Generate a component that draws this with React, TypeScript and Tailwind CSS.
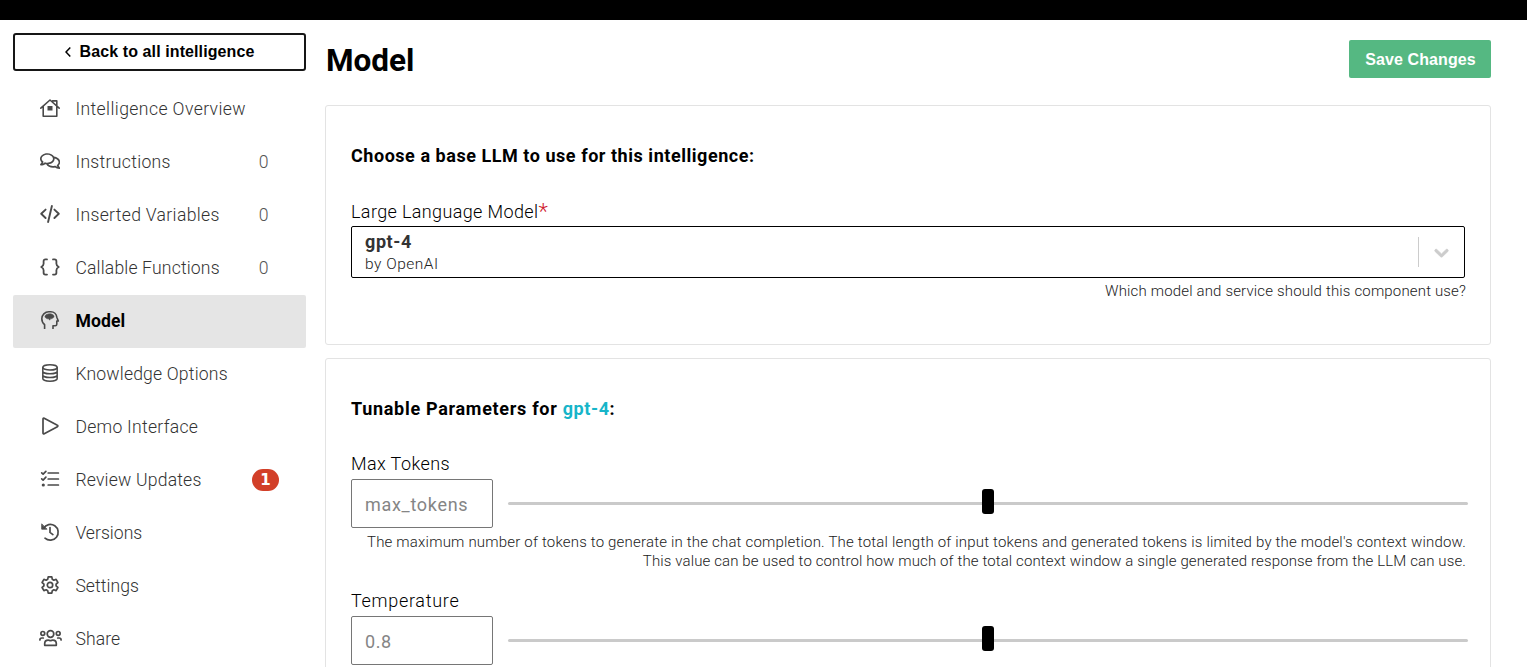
import type { ReactNode } from "react";
import { FaRegComments } from "react-icons/fa";

function Stroke({ w = 18, sw = 1.6, children }: { w?: number; sw?: number; children: ReactNode }) {
  return (
    <svg
      width={w}
      height={18}
      viewBox={`0 0 ${w} 18`}
      fill="none"
      stroke="currentColor"
      strokeWidth={sw}
      strokeLinecap="round"
      strokeLinejoin="round"
      className="shrink-0 overflow-visible"
    >
      {children}
    </svg>
  );
}

const HomeIcon = () => (
  <Stroke w={20} sw={1.6}>
    <path d="M.8 9.2 10 1l9.2 8.2M3.2 7.500v9.700h13.600V7.500M12.600 1.900h4.200v4.800" />
    <rect x="7.500" y="7" width="5" height="4.500" fill="currentColor" stroke="none" />
  </Stroke>
);

const CodeIcon = () => (
  <Stroke w={20} sw={1.9}>
    <path d="M5.600 4.600 1.200 8.800l4.400 4.200M14.400 4.600l4.400 4.200-4.400 4.200M11.900 1 8.100 17" />
  </Stroke>
);

const BracesIcon = () => (
  <Stroke w={20} sw={1.800}>
    <path d="M7 1.400H5.400c-1.100 0-1.800.7-1.800 1.800v2.600c0 1.600-.6 2.400-2.400 3.200 1.800.8 2.400 1.600 2.400 3.200v2.600c0 1.100.7 1.800 1.800 1.800H7M13 1.400h1.600c1.100 0 1.800.7 1.800 1.800v2.600c0 1.600.6 2.400 2.400 3.200-1.800.8-2.400 1.600-2.400 3.200v2.600c0 1.100-.7 1.800-1.800 1.800H13" />
  </Stroke>
);

const BrainIcon = () => (
  <Stroke sw={1.600}>
    <path
      strokeLinecap="butt"
      d="M3.600 18v-4.300C1.800 12.200.8 10.200.8 7.800.8 3.900 3.900.8 7.800.8h2c3.200 0 5.700 2.300 6 5.400l1.500 3.800h-1.500v3.200c0 .9-.7 1.600-1.600 1.600H12V18"
    />
    <path
      fill="currentColor"
      stroke="currentColor"
      strokeWidth=".5"
      d="M7 3.200c.5-.6 1.500-.7 2-.2.7-.5 1.700-.3 2.100.4.9 0 1.600.6 1.700 1.400.6.9.1 2-1 2.100-.4.7-1.300 1-2.100.7L8.700 9.200 7.600 7.700C6.400 8 5.500 7.700 5 7 3.900 6.600 3.600 5.400 4.300 4.600 4.600 3.600 5.800 2.900 7 3.200z"
    />
  </Stroke>
);

const DatabaseIcon = () => (
  <Stroke w={16} sw={1.500}>
    <ellipse cx="8" cy="3.400" rx="7.200" ry="2.600" />
    <path d="M.8 3.400v11.200c0 1.400 3.200 2.600 7.200 2.600s7.200-1.200 7.200-2.600V3.400M.8 7.200c0 1.400 3.200 2.600 7.200 2.600s7.200-1.200 7.200-2.600M.8 10.900c0 1.400 3.200 2.600 7.200 2.600s7.200-1.200 7.200-2.600" />
  </Stroke>
);

const PlayIcon = () => (
  <Stroke w={17} sw={1.700}>
    <path d="M1 1.900v14.200c0 .7.6 1 1.200.7L15.400 9.700c.6-.3.6-1.100 0-1.400L2.200 1.200C1.600.9 1 1.200 1 1.900z" />
  </Stroke>
);

const TasksIcon = () => (
  <Stroke sw={1.700}>
    <path d="M7.200 3h10.200M7.200 9h10.200M7.200 15h10.200M.7 2.900l1.400 1.300L4.900 1.300M.7 8.800l1.400 1.300 2.800-2.900" />
    <circle cx="2.300" cy="15" r="1.600" fill="currentColor" stroke="none" />
  </Stroke>
);

const HistoryIcon = () => (
  <Stroke sw={1.700}>
    <path d="M2.500 5.200A7.900 7.900 0 1 1 4 15.200M9 4.600v4.800l2.900 2.200" />
    <path d="M.7 1.200v5h5z" fill="currentColor" strokeWidth=".8" />
  </Stroke>
);

const GearIcon = () => (
  <Stroke sw={1.700}>
    <circle cx="9" cy="9" r="2.700" />
    <path d="M7.200.9h3.600l.5 2.400 1.500.9 2.300-.8 1.800 3.100-1.800 1.600v1.800l1.800 1.600-1.800 3.100-2.300-.8-1.500.9-.5 2.400H7.200l-.5-2.400-1.500-.9-2.300.8-1.800-3.100 1.800-1.600V8.100L1.100 6.500l1.800-3.100 2.300.8 1.500-.9z" />
  </Stroke>
);

const UsersIcon = () => (
  <Stroke w={23} sw={1.700}>
    <circle cx="11.500" cy="5" r="3.300" />
    <circle cx="3.800" cy="4.400" r="1.900" />
    <circle cx="19.200" cy="4.400" r="1.900" />
    <path d="M5.700 16.300v-1.700c0-2.100 1.500-3.400 3.500-3.400.9 0 1.400.4 2.300.4s1.400-.4 2.300-.4c2 0 3.500 1.300 3.500 3.400v1.700zM.9 10.900C.9 9.700 1.800 9 2.900 9h1.400M22.100 10.900c0-1.200-.9-1.900-2-1.900h-1.400" />
  </Stroke>
);

type NavItem = { label: string; track: string; icon: ReactNode; count?: string; badge?: string; active?: boolean };

const NAV: NavItem[] = [
  { label: "Intelligence Overview", track: "tracking-[0.4px]", icon: <HomeIcon /> },
  { label: "Instructions", track: "tracking-[0.31px]", icon: <FaRegComments className="h-[18px] w-[20.25px]" />, count: "0" },
  { label: "Inserted Variables", track: "tracking-[0.32px]", icon: <CodeIcon />, count: "0" },
  { label: "Callable Functions", track: "tracking-[0.16px]", icon: <BracesIcon />, count: "0" },
  { label: "Model", track: "tracking-[0.1px]", icon: <BrainIcon />, active: true },
  { label: "Knowledge Options", track: "tracking-[0.17px]", icon: <DatabaseIcon /> },
  { label: "Demo Interface", track: "tracking-[0.27px]", icon: <PlayIcon /> },
  { label: "Review Updates", track: "tracking-[0.19px]", icon: <TasksIcon />, badge: "1" },
  { label: "Versions", track: "tracking-normal", icon: <HistoryIcon /> },
  { label: "Settings", track: "tracking-[0.05px]", icon: <GearIcon /> },
  { label: "Share", track: "tracking-[0.1px]", icon: <UsersIcon /> },
];

function NavRow({ item }: { item: NavItem }) {
  return (
    <a
      className={`flex h-[53px] items-center rounded-[2px] pr-[27px] pl-[25px] text-[17.6px] ${
        item.active ? "bg-[#e5e5e5] font-bold text-black" : "font-light text-[#333]"
      }`}
    >
      <span className="mb-[3px] flex w-6 justify-center text-[#4a4a4a]">{item.icon}</span>
      <span className={`ml-[13.4px] flex-1 whitespace-nowrap ${item.track}`}>{item.label}</span>
      {item.count && <span className="mr-[10.5px] text-[#555]">{item.count}</span>}
      {item.badge && (
        <span className="mb-px flex h-[22px] w-[27px] items-center justify-center rounded-full bg-[#d23f28] font-['DejaVu_Sans',sans-serif] text-[15px] font-bold text-white">
          {item.badge}
        </span>
      )}
    </a>
  );
}

function Slider() {
  return (
    <div className="relative ml-[15px] h-[3px] w-[960px] shrink-0 rounded-full bg-[#cacaca]">
      <div className="absolute top-[-13px] left-[474px] h-[25px] w-3 rounded-[3px] bg-black" />
    </div>
  );
}

function Param({ label, track, placeholder, phTrack }: { label: string; track: string; placeholder: string; phTrack: string }) {
  return (
    <>
      <label className={`block h-[26px] text-[18px] leading-[22px] font-light text-black ${track}`}>{label}</label>
      <div className="flex h-[49px] items-center">
        <div
          className={`flex h-[49px] w-[142px] shrink-0 items-center rounded-[2px] border border-[#767676] px-[13px] pt-px text-[18px] text-[#858585] ${phTrack}`}
        >
          {placeholder}
        </div>
        <Slider />
      </div>
    </>
  );
}

export default function App() {
  return (
    <div className="h-[667px] overflow-hidden bg-white font-['Roboto',sans-serif]">
      <div className="h-5 bg-black" />
      <div className="flex pl-[13px]">
        <aside className="w-[293px] shrink-0 pt-[13px]">
          <button className="mb-3 flex h-[38px] w-full items-center justify-center rounded-[3px] border-2 border-[#161616] font-['Liberation_Sans',sans-serif] text-[16px] font-bold tracking-[0.1px] text-black">
            <svg width="6" height="10" viewBox="0 0 6 10" fill="none" stroke="currentColor" strokeWidth="1.5" className="mr-[9px]">
              <path d="M5.300.6 1 5l4.300 4.400" />
            </svg>
            Back to all intelligence
          </button>
          <nav>
            {NAV.map((item) => (
              <NavRow key={item.label} item={item} />
            ))}
          </nav>
        </aside>

        <main className="ml-[19px] w-[1166px] shrink-0">
          <header className="flex h-[85px] items-start justify-between pt-5">
            <h1 className="pt-px pl-px text-[31.5px] leading-[40px] font-bold text-black">Model</h1>
            <button className="h-[38px] w-[142px] rounded-[2px] bg-[#55b882] pt-0.5 pl-px font-['Liberation_Sans',sans-serif] text-[16px] font-bold tracking-[0.1px] text-white">
              Save Changes
            </button>
          </header>

          <section className="h-60 rounded-[3px] border border-[#e3e3e3] px-[25px] pt-[38px]">
            <h2 className="h-14 text-[18px] leading-6 font-bold tracking-[0.54px] text-black">
              Choose a base LLM to use for this intelligence:
            </h2>
            <label className="flex h-[26px] text-[18px] leading-6 font-light tracking-[0.37px] text-black">
              Large Language Model
              <span className="text-[22px] leading-6 font-light text-[#d0202e]">*</span>
            </label>
            <div className="flex h-[52px] items-center rounded-[2px] border border-black pl-[13px]">
              <div className="flex-1 pt-0.5">
                <div className="text-[18px] leading-[22px] font-bold tracking-[0.6px] text-[#333]">gpt-4</div>
                <div className="text-[15.5px] leading-[22px] font-light tracking-[0.5px] text-[#222]">by OpenAI</div>
              </div>
              <div className="h-[30px] w-px bg-[#ccc]" />
              <svg width="23" height="23" viewBox="0 0 20 20" className="mr-[11px] ml-[11px] text-[#ccc]">
                <path
                  fill="currentColor"
                  stroke="currentColor"
                  strokeWidth=".8"
                  d="M4.516 7.548c0.436-0.446 1.043-0.481 1.576 0l3.908 3.747 3.908-3.747c0.533-0.481 1.141-0.446 1.574 0 0.436 0.445 0.408 1.197 0 1.615-0.406 0.418-4.695 4.502-4.695 4.502-0.217 0.223-0.502 0.335-0.787 0.335s-0.570-0.112-0.789-0.335c0 0-4.287-4.084-4.695-4.502s-0.436-1.170 0-1.615z"
                />
              </svg>
            </div>
            <p className="-mr-px pt-1 text-right text-[15px] leading-[19px] font-light tracking-[0.16px] text-[#222]">
              Which model and service should this component use?
            </p>
          </section>

          <section className="mt-[13px] h-[400px] rounded-[3px] border border-[#e3e3e3] px-[25px] pt-[38px]">
            <h2 className="h-14 text-[18px] leading-6 font-bold tracking-[0.7px] text-black">
              Tunable Parameters for <span className="tracking-[0.6px] text-[#17b5c9]">gpt-4</span>:
            </h2>
            <Param label="Max Tokens" track="tracking-[0.4px]" placeholder="max_tokens" phTrack="tracking-[0.7px]" />
            <p className="-mr-px h-[62px] pt-[5px] text-right text-[15px] leading-[19px] font-light tracking-[0.19px] whitespace-nowrap text-[#222]">
              The maximum number of tokens to generate in the chat completion. The total length of input tokens and generated
              tokens is limited by the model's context window.
              <br />
              <span className="tracking-[0.12px]">
                This value can be used to control how much of the total context window a single generated response from the
                LLM can use.
              </span>
            </p>
            <Param label="Temperature" track="tracking-[0.7px]" placeholder="0.8" phTrack="tracking-[0.6px]" />
          </section>
        </main>
      </div>
    </div>
  );
}
